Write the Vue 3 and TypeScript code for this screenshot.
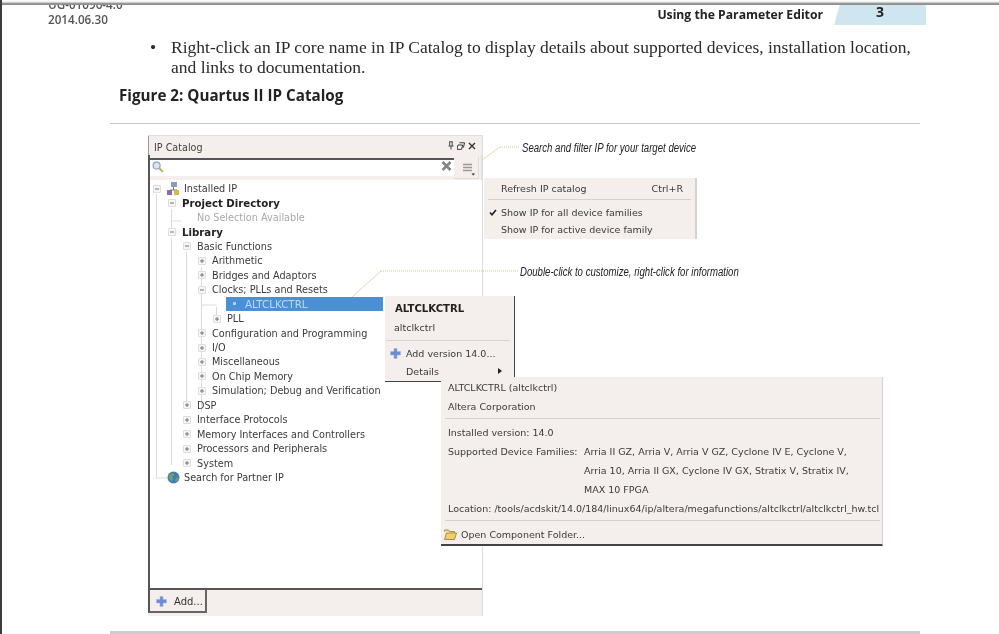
<script setup lang="ts">
interface Row {
  label: string
  level: number
  toggle?: 'plus' | 'minus'
  bold?: boolean
  muted?: boolean
  selected?: boolean
  icon?: 'tree' | 'globe'
}

const rows: Row[] = [
  { label: 'Installed IP', level: 0, toggle: 'minus', icon: 'tree' },
  { label: 'Project Directory', level: 1, toggle: 'minus', bold: true },
  { label: 'No Selection Available', level: 2, muted: true },
  { label: 'Library', level: 1, toggle: 'minus', bold: true },
  { label: 'Basic Functions', level: 2, toggle: 'minus' },
  { label: 'Arithmetic', level: 3, toggle: 'plus' },
  { label: 'Bridges and Adaptors', level: 3, toggle: 'plus' },
  { label: 'Clocks; PLLs and Resets', level: 3, toggle: 'minus' },
  { label: 'ALTCLKCTRL', level: 4, selected: true },
  { label: 'PLL', level: 4, toggle: 'plus' },
  { label: 'Configuration and Programming', level: 3, toggle: 'plus' },
  { label: 'I/O', level: 3, toggle: 'plus' },
  { label: 'Miscellaneous', level: 3, toggle: 'plus' },
  { label: 'On Chip Memory', level: 3, toggle: 'plus' },
  { label: 'Simulation; Debug and Verification', level: 3, toggle: 'plus' },
  { label: 'DSP', level: 2, toggle: 'plus' },
  { label: 'Interface Protocols', level: 2, toggle: 'plus' },
  { label: 'Memory Interfaces and Controllers', level: 2, toggle: 'plus' },
  { label: 'Processors and Peripherals', level: 2, toggle: 'plus' },
  { label: 'System', level: 2, toggle: 'plus' },
  { label: 'Search for Partner IP', level: 0, icon: 'globe' },
]

const indent = (r: Row): string => `${3 + r.level * 15}px`

const detailFamilies = [
  'Arria II GZ, Arria V, Arria V GZ, Cyclone IV E, Cyclone V,',
  'Arria 10, Arria II GX, Cyclone IV GX, Stratix V, Stratix IV,',
  'MAX 10 FPGA',
]
</script>

<template>
  <div class="page">
    <header class="head">
      <div class="doc-id">
        <div>UG-01096-4.0</div>
        <div>2014.06.30</div>
      </div>
      <div class="section">Using the Parameter Editor</div>
      <div class="tab"><span>3</span></div>
    </header>

    <div class="bullet">
      <span class="dot">•</span>
      <p>Right-click an IP core name in IP Catalog to display details about supported devices, installation location,<br />and links to documentation.</p>
    </div>

    <h2 class="fig-title">Figure 2: Quartus II IP Catalog</h2>
    <div class="rule"></div>

    <section class="panel">
      <div class="titlebar">
        <span>IP Catalog</span>
        <div class="win-icons">
          <svg width="6" height="9" viewBox="0 0 6 9"><path d="M1.200 .8h3.400M1.700 .8v4M4.200 .8v4M.5 5h5M3 5v3.500" fill="none" stroke="#444" stroke-width="1" /></svg>
          <svg width="8" height="8" viewBox="0 0 8 8"><path d="M2.500 .8h5l-1 4.400h-1M1 3h4.600L4.600 7.300H0z" fill="#fff" stroke="#333" stroke-width="1" /></svg>
          <svg width="8" height="8" viewBox="0 0 8 8"><path d="M1 1l6 6M7 1L1 7" stroke="#333" stroke-width="1.400" /></svg>
        </div>
      </div>

      <div class="body">
        <div class="searchbar">
          <div class="search">
            <svg width="12" height="12" viewBox="0 0 12 12"><circle cx="4.600" cy="4.600" r="3.500" fill="#d8e7f4" stroke="#8fa7be" stroke-width="1.200" /><path d="M7.300 7.300l3.600 3.600" stroke="#c7a957" stroke-width="2" /></svg>
            <svg class="clear" width="11" height="10" viewBox="0 0 11 10"><path d="M1.500 1l8 8M9.500 1l-8 8" stroke="#848484" stroke-width="2.600" /></svg>
          </div>
          <div class="filter">
            <svg width="13" height="13" viewBox="0 0 13 13"><path d="M1 1.500h9M1 4.500h9M1 7.500h9" stroke="#9a9a9a" stroke-width="1.300" /><path d="M9.500 10.500h3.500l-1.750 2z" fill="#222" /></svg>
          </div>
        </div>

        <div class="tree">
          <svg class="guides" width="333" height="310" viewBox="0 0 333 310">
            <path d="M6.500 12v284h11M21.500 27v21M21.500 39h10M21.500 56v227M36.500 70v155M51.500 85v145M51.500 123h15M66.500 125v13" fill="none" stroke="#dcdcdc" />
          </svg>
          <div
            v-for="row in rows"
            :key="row.label"
            class="row"
            :class="{ bold: row.bold, muted: row.muted }"
            :style="{ paddingLeft: indent(row) }"
          >
            <span v-if="row.selected" class="selected">
              <i></i>
              {{ row.label }}
            </span>
            <template v-else>
              <span v-if="row.toggle" class="box">
                <svg width="6" height="6" viewBox="0 0 6 6">
                  <path :d="row.toggle === 'plus' ? 'M1 3h4M3 1v4' : 'M1 3h4'" stroke="#777" stroke-width="1" />
                </svg>
              </span>
              <span v-else-if="row.level === 2" class="box empty"></span>
              <span v-else class="box blank"></span>
              <svg v-if="row.icon === 'tree'" class="node-icon" width="13" height="13" viewBox="0 0 13 13">
                <path d="M6.500 5v3M3 8h7" stroke="#777" />
                <rect x="4" y="0" width="6" height="5" fill="#8d9cbd" />
                <rect x="0" y="8" width="5" height="5" fill="#8a6cab" />
                <rect x="7" y="8" width="5" height="5" fill="#d9b84a" />
              </svg>
              <svg v-if="row.icon === 'globe'" class="node-icon" width="13" height="13" viewBox="0 0 13 13">
                <circle cx="6.500" cy="6.500" r="6" fill="#3f7fb0" />
                <path d="M2 4c2-2 4-2 5-1 1 2-2 2-1 4 0 2-1 3-2 3C2 8 1 6 2 4zM9 7c2-1 3 0 3 1-1 2-2 3-3 3-1-1-1-3 0-4z" fill="#6b9e70" />
              </svg>
              <span class="name">{{ row.label }}</span>
            </template>
          </div>
        </div>

        <div class="foot">
          <button class="add" type="button">
            <svg width="11" height="11" viewBox="0 0 11 11"><path d="M4 .5h3v3h3.500v3.500H7v3.500H4V7H.5V3.500H4z" fill="#6d8bd0" stroke="#a5b7e3" stroke-width=".6" /></svg>
            Add...
          </button>
        </div>
      </div>
    </section>

    <div class="bottom-rule"></div>

    <svg class="leaders" width="999" height="634" viewBox="0 0 999 634">
      <path d="M482 160L500 147" fill="none" stroke="#e6d6b2" />
      <path d="M500 147H520" fill="none" stroke="#d6c291" stroke-dasharray="1 1" />
      <path d="M352 297L381 271" fill="none" stroke="#e6d6b2" />
      <path d="M381 271H518" fill="none" stroke="#d6c291" stroke-dasharray="1 1" />
    </svg>
    <div class="note note-search">Search and filter IP for your target device</div>
    <div class="note note-custom">Double-click to customize, right-click for information</div>

    <div class="menu filter-menu">
      <div class="fm-row first"><span>Refresh IP catalog</span><span>Ctrl+R</span></div>
      <div class="sep"></div>
      <div class="fm-row checked">
        <svg width="8" height="7" viewBox="0 0 8 7"><path d="M1 3.500l2 2.300L7 1" fill="none" stroke="#222" stroke-width="1.600" /></svg>
        <span>Show IP for all device families</span>
      </div>
      <div class="fm-row"><span>Show IP for active device family</span></div>
    </div>

    <div class="menu context">
      <div class="ctx-title">ALTCLKCTRL</div>
      <div class="ctx-sub">altclkctrl</div>
      <div class="sep"></div>
      <div class="ctx-row add-version">
        <svg width="11" height="11" viewBox="0 0 11 11"><path d="M4 .5h3v3h3.500v3.500H7v3.500H4V7H.5V3.500H4z" fill="#6d8bd0" stroke="#a5b7e3" stroke-width=".6" /></svg>
        <span>Add version 14.0...</span>
      </div>
      <div class="ctx-row details">
        <span>Details</span>
        <svg width="4" height="6" viewBox="0 0 4 6"><path d="M0 0l4 3-4 3z" fill="#222" /></svg>
      </div>
    </div>

    <div class="menu details-pop">
      <div class="d-row">ALTCLKCTRL (altclkctrl)</div>
      <div class="d-row">Altera Corporation</div>
      <div class="sep"></div>
      <div class="d-row">Installed version: 14.0</div>
      <div class="d-grid">
        <span>Supported Device Families:</span>
        <div>
          <div v-for="line in detailFamilies" :key="line" class="d-row flush">{{ line }}</div>
        </div>
      </div>
      <div class="d-row">Location: /tools/acdskit/14.0/184/linux64/ip/altera/megafunctions/altclkctrl/altclkctrl_hw.tcl</div>
      <div class="sep"></div>
      <div class="d-open">
        <svg width="13" height="11" viewBox="0 0 13 11"><path d="M.5 2.500V1h4l1 1.500h5V4" fill="#f2d98a" stroke="#a98d45" /><path d="M.5 10.500L2.500 4H12.500l-2 6.500z" fill="#f3cf6a" stroke="#a98d45" /></svg>
        <span>Open Component Folder...</span>
      </div>
    </div>
  </div>
</template>

<style>
html,
body {
  margin: 0;
  background: #fff;
}
</style>

<style scoped>
.page {
  position: relative;
  box-sizing: border-box;
  width: 999px;
  height: 634px;
  overflow: hidden;
  background: #fff;
  border-left: 2px solid #3c3c3c;
  display: flex;
  flex-direction: column;
  font-family: "DejaVu Sans", sans-serif;
  color: #333;
  filter: blur(0.4px);
}
.page::before {
  content: "";
  position: absolute;
  z-index: 2;
  left: 0;
  right: 0;
  top: 0;
  height: 5px;
  background: linear-gradient(#fff 0, #eee 40%, #999 65%, #8c8c8c 100%);
}
.head {
  display: flex;
  align-items: flex-start;
  height: 25px;
  flex: none;
  padding: 4px 73px 0 46px;
  font-family: "Open Sans", sans-serif;
}
.doc-id {
  margin-top: -7px;
  font-size: 11.7px;
  font-weight: 600;
  line-height: 15px;
  color: #555;
}
.section {
  margin-left: auto;
  margin-top: 2px;
  font-size: 12.2px;
  font-weight: 700;
  line-height: 18px;
  color: #222;
}
.tab {
  flex: none;
  box-sizing: border-box;
  width: 92px;
  height: 21px;
  margin-left: 11px;
  text-align: center;
  background: #cfe6f0;
  clip-path: polygon(6px 0, 100% 0, 100% 100%, 0 100%);
  font-size: 14px;
  font-weight: 700;
  line-height: 16px;
  color: #222;
}
.bullet {
  display: flex;
  flex: none;
  margin: 9px 0 0 148px;
  font-family: "Liberation Serif", serif;
  font-size: 17.5px;
  line-height: 19.5px;
  color: #2a2a2a;
}
.dot {
  width: 21px;
}
.bullet p {
  margin: 0;
  white-space: nowrap;
}
.fig-title {
  flex: none;
  margin: 7px 0 0 117px;
  font-family: "Open Sans", sans-serif;
  font-size: 15.2px;
  font-weight: 700;
  line-height: 22px;
  color: #222;
}
.rule {
  flex: none;
  height: 1px;
  margin: 17px 79px 0 108px;
  background: #c8c8c8;
}
.panel {
  flex: none;
  box-sizing: border-box;
  display: flex;
  flex-direction: column;
  width: 335px;
  height: 481px;
  margin: 11px 0 0 146px;
  background: #f4eeec;
  border-right: 1px solid #ddd;
  border-top: 1px solid #ddd;
}
.titlebar {
  display: flex;
  flex: none;
  align-items: center;
  box-sizing: border-box;
  height: 19px;
  padding: 3px 5px 0;
  font-size: 9.6px;
  color: #444;
  border-left: 1px solid #999;
}
.win-icons {
  display: flex;
  align-items: center;
  gap: 3px;
  margin-left: auto;
  margin-right: 1px;
  margin-top: -3px;
}
.body {
  display: flex;
  flex: 1;
  flex-direction: column;
  min-height: 0;
  position: relative;
}
.searchbar {
  display: flex;
  flex: none;
  height: 25px;
  border-left: 2px solid #555;
  box-sizing: border-box;
  padding: 3px 2px 0 0;
  border-right: 1px solid #e0e0e0;
}
.search {
  display: flex;
  align-items: flex-start;
  justify-content: space-between;
  flex: 1;
  height: 18px;
  box-sizing: border-box;
  padding: 1px 2px 0 2px;
  background: #fff;
  border-top: 2px solid #555;
}
.filter {
  display: flex;
  align-items: center;
  justify-content: center;
  width: 25px;
  height: 22px;
  box-sizing: border-box;
  padding: 4px 0 0 4px;
  margin-top: -1px;
  border: 1px solid #ddd;
  border-width: 0 1px 1px 0;
}
.tree {
  position: relative;
  flex: 1;
  min-height: 0;
  background: #fff;
  border-left: 2px solid #555;
  padding-top: 1.500px;
}
.guides {
  position: absolute;
  left: 0;
  top: 1.500px;
}
.row {
  position: relative;
  display: flex;
  align-items: center;
  height: 14.45px;
  box-sizing: border-box;
  font-size: 9.7px;
  white-space: nowrap;
  color: #3a3a3a;
}
.row.bold {
  font-size: 10.2px;
  font-weight: 700;
  color: #222;
}
.row.muted {
  color: #a8a8a8;
}
.box {
  display: flex;
  align-items: center;
  justify-content: center;
  flex: none;
  box-sizing: border-box;
  width: 8px;
  height: 8px;
  margin-right: 6px;
  background: #f6f6f6;
  border: 1px solid #dedede;
  border-radius: 1px;
}
.box.blank,
.box.empty {
  background: transparent;
  border-color: transparent;
}
.node-icon {
  flex: none;
  margin-right: 4px;
  background: #fff;
}
.selected {
  display: flex;
  align-items: center;
  width: 157px;
  height: 14px;
  margin-left: 13px;
  padding-left: 19px;
  box-sizing: border-box;
  background: #4c90d4;
  color: #b7dcf6;
  font-size: 10.300px;
  position: relative;
}
.selected i {
  position: absolute;
  left: 7px;
  top: 5px;
  width: 3px;
  height: 3px;
  background: #a8d2f2;
}
.foot {
  flex: none;
  height: 28px;
  box-sizing: border-box;
  background: #f4eeec;
  border-top: 2px solid #555;
}
.add {
  display: flex;
  align-items: center;
  gap: 7px;
  box-sizing: border-box;
  width: 59px;
  height: 23px;
  padding: 1px 0 0 6px;
  background: #f4eeec;
  border: 0;
  border-left: 2px solid #555;
  border-right: 2px solid #666;
  border-bottom: 2px solid #666;
  font-family: inherit;
  font-size: 10px;
  color: #333;
}
.bottom-rule {
  position: absolute;
  left: 108px;
  top: 631px;
  width: 810px;
  height: 3px;
  background: #ccc;
}
.leaders {
  position: absolute;
  left: -2px;
  top: 0;
  pointer-events: none;
}
.note {
  position: absolute;
  font-family: "Liberation Sans", sans-serif;
  font-style: italic;
  font-size: 12px;
  line-height: 14px;
  color: #222;
  white-space: nowrap;
  transform: scaleX(0.8);
  transform-origin: left center;
}
.note-search {
  left: 520px;
  top: 141px;
}
.note-custom {
  left: 518px;
  top: 265px;
}
.menu {
  position: absolute;
  box-sizing: border-box;
  background: #f4eeec;
  font-size: 9.5px;
  color: #3a3a3a;
  white-space: nowrap;
}
.sep {
  height: 1px;
  background: #d8d2cf;
}
.filter-menu {
  left: 482px;
  top: 178px;
  width: 213px;
  height: 61px;
  padding: 0 4px 0 0;
  border-right: 2px solid #d6d2d0;
}
.filter-menu .sep {
  margin: 0 0 0 4px;
}
.fm-row {
  position: relative;
  display: flex;
  justify-content: space-between;
  height: 17px;
  align-items: center;
  padding: 0 8px 0 17px;
}
.fm-row.first {
  height: 21px;
}
.fm-row.checked {
  margin-top: 4px;
}
.fm-row.checked svg {
  position: absolute;
  left: 5px;
  top: 5px;
}
.context {
  left: 383px;
  top: 296px;
  width: 130px;
  height: 86px;
  border-right: 1px solid #444;
  border-bottom: 1px solid #444;
  padding-top: 4px;
}
.ctx-title {
  height: 17px;
  padding-left: 10px;
  font-size: 10.1px;
  font-weight: 700;
  line-height: 17px;
  color: #222;
}
.ctx-sub {
  height: 19px;
  margin-top: 1px;
  padding-left: 9px;
  line-height: 19px;
}
.context .sep {
  margin: 3px 4px 0 1px;
}
.ctx-row {
  display: flex;
  align-items: center;
  gap: 5px;
  height: 18px;
  padding-left: 5px;
}
.add-version {
  margin-top: 3px;
}
.ctx-row.details {
  justify-content: space-between;
  padding: 0 12px 0 21px;
}
.details-pop {
  left: 439px;
  top: 377px;
  width: 442px;
  height: 169px;
  border-right: 1px solid #d6d2d0;
  border-bottom: 2px solid #444;
  padding-top: 1px;
  overflow: hidden;
}
.details-pop .sep {
  margin: 2px 2px 4px 4px;
}
.d-row {
  height: 19px;
  padding-left: 7px;
  line-height: 19px;
}
.d-row.flush {
  padding-left: 0;
}
.d-grid {
  display: flex;
  line-height: 19px;
  padding-left: 7px;
}
.d-grid > span {
  width: 136px;
  flex: none;
}
.d-open {
  display: flex;
  align-items: center;
  gap: 4px;
  height: 19px;
  padding-left: 3px;
}
</style>
